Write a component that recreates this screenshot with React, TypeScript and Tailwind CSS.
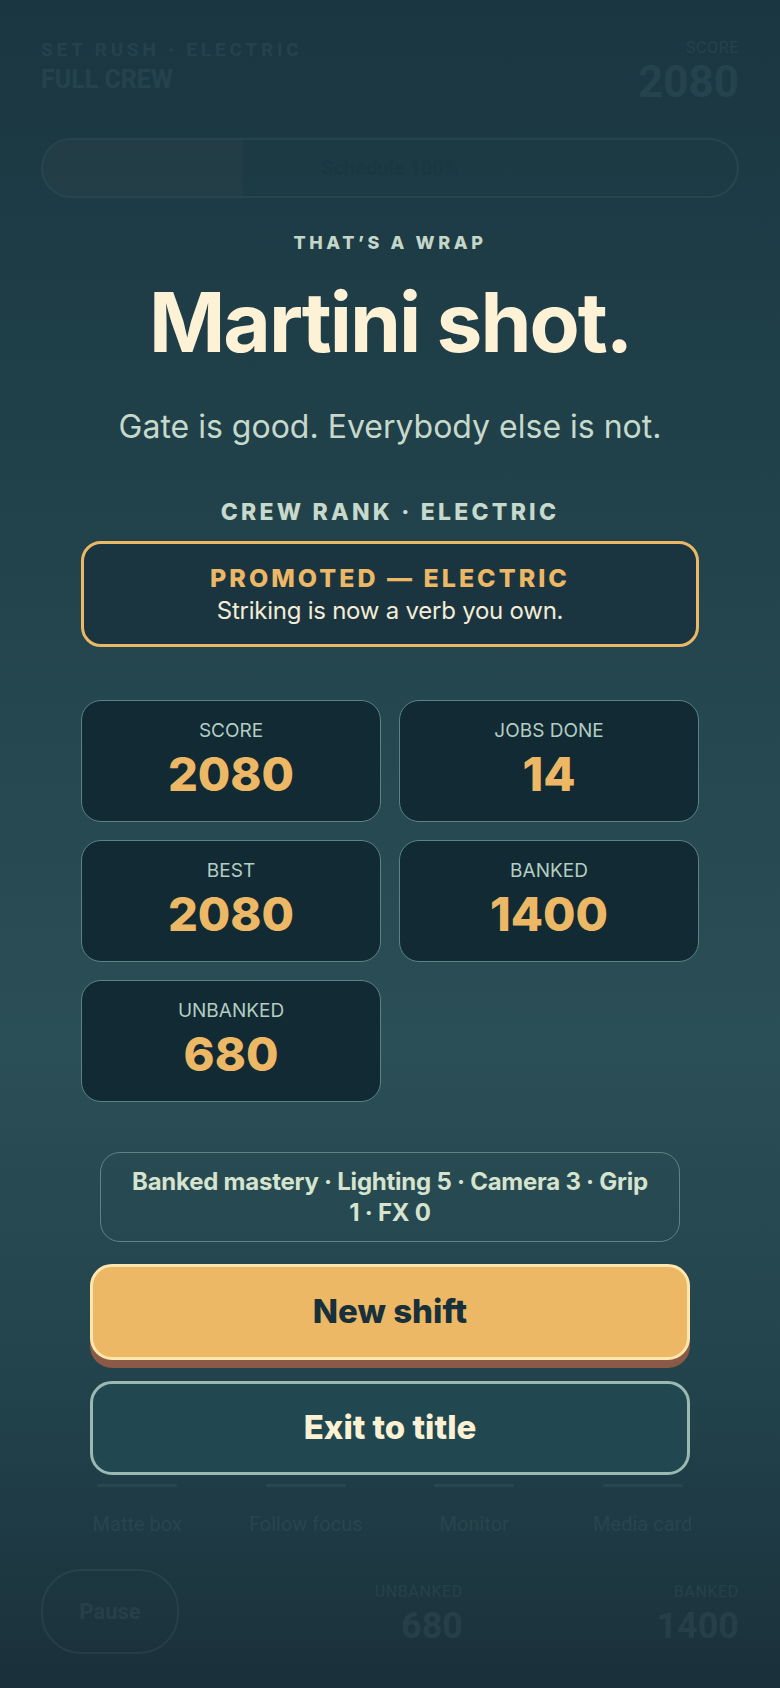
import type { ReactNode } from "react";

interface Stat {
  label: string;
  value: string;
}

const stats: Stat[] = [
  { label: "SCORE", value: "2080" },
  { label: "JOBS DONE", value: "14" },
  { label: "BEST", value: "2080" },
  { label: "BANKED", value: "1400" },
  { label: "UNBANKED", value: "680" },
];

const tools = ["Matte box", "Follow focus", "Monitor", "Media card"];

function StatCard({ label, value }: Stat) {
  return (
    <div className="flex h-[122px] flex-col items-center rounded-[20px] border-[1.5px] border-[#5a8483] bg-[#112a33] pt-[19px]">
      <div className="text-[19px] leading-[22px] text-[#b4cdc2]">{label}</div>
      <div className="mt-[8px] text-[47px] leading-[48px] font-extrabold text-[#ecb865]">
        {value}
      </div>
    </div>
  );
}

function FaintStat({ label, value, big }: Stat & { big?: boolean }) {
  return (
    <div className="flex flex-col items-end">
      <span className="text-[16px] tracking-[0.04em]">{label}</span>
      <span
        className={
          big
            ? "text-[44px] leading-[44px] font-bold"
            : "mt-[4px] text-[36px] leading-[36px] font-bold"
        }
      >
        {value}
      </span>
    </div>
  );
}

// game screen that sits dimmed behind the wrap card
function ShiftScreen() {
  return (
    <div className="flex min-h-[1688px] flex-col px-[41px] pt-[36px] pb-[34px] font-[family-name:Roboto,sans-serif] text-[#9fc2bd] opacity-[0.08]">
      <div className="flex justify-between">
        <div>
          <div className="text-[19px] font-bold tracking-[0.2em]">SET RUSH · ELECTRIC</div>
          <div className="text-[25px] leading-[30px] font-bold">FULL CREW</div>
        </div>
        <FaintStat label="SCORE" value="2080" big />
      </div>
      <div className="mt-[34px] flex h-[60px] items-center overflow-hidden rounded-full border-2 border-[#9fc2bd]">
        <div className="h-full w-[200px] bg-[#c79a78]/50" />
        <div className="flex-1 pr-[200px] text-center text-[20px] font-bold text-[#0d1f25]">
          Schedule 100%
        </div>
      </div>
      <div className="flex-1" />
      <div className="grid grid-cols-4 gap-[16px] px-[20px]">
        {tools.map((t) => (
          <div key={t} className="flex flex-col items-center gap-[22px]">
            <div className="h-[3px] w-[80px] rounded bg-[#9fc2bd]" />
            <span className="text-[20px]">{t}</span>
          </div>
        ))}
      </div>
      <div className="mt-[30px] flex items-center">
        <div className="flex h-[85px] w-[138px] items-center justify-center rounded-[40px] border-2 border-[#9fc2bd] text-[22px] font-bold">
          Pause
        </div>
        <div className="flex flex-1 justify-end">
          <FaintStat label="UNBANKED" value="680" />
        </div>
        <div className="flex w-[276px] justify-end">
          <FaintStat label="BANKED" value="1400" />
        </div>
      </div>
    </div>
  );
}

function Button({
  children,
  primary,
}: {
  children: ReactNode;
  primary?: boolean;
}) {
  return primary ? (
    <button className="mx-[9px] flex h-[96px] items-center justify-center rounded-[22px] border-[3px] border-[#ffe7ad] bg-[#edb866] text-[33px] font-extrabold text-[#17303a] shadow-[0_8px_0_#8a5a46]">
      {children}
    </button>
  ) : (
    <button className="mx-[9px] flex h-[94px] items-center justify-center rounded-[22px] border-[3px] border-[#9bb9b2] bg-[#214851] text-[33px] font-extrabold text-[#fdf1d4]">
      {children}
    </button>
  );
}

function WrapCard() {
  return (
    <div className="absolute inset-0 flex flex-col px-[81px] pt-[231px] text-center">
      <div className="text-[18px] leading-[24px] font-extrabold tracking-[0.2em] text-[#c3d6c8]">
        THAT’S A WRAP
      </div>
      <h1 className="mt-[27px] text-[82px] leading-[82px] font-bold tracking-[-0.025em] text-[#fdf2d6]">
        Martini shot.
      </h1>
      <p className="mt-[45px] text-[32px] leading-[36px] text-[#c6d9cb]">
        Gate is good. Everybody else is not.
      </p>
      <div className="mt-[53px] text-[23px] leading-[28px] font-extrabold tracking-[0.14em] text-[#c6d9cb]">
        CREW RANK · ELECTRIC
      </div>
      <div className="mt-[15px] flex h-[106px] flex-col items-center justify-center rounded-[20px] border-[3px] border-[#ebb866] bg-[#1b3540]">
        <div className="text-[25px] leading-[30px] font-extrabold tracking-[0.12em] text-[#ecb865]">
          PROMOTED — ELECTRIC
        </div>
        <div className="mt-[4px] text-[24px] leading-[28px] tracking-[-0.01em] text-[#f3ecd7]">
          Striking is now a verb you own.
        </div>
      </div>
      <div className="mt-[53px] grid grid-cols-2 gap-[18px]">
        {stats.map((s) => (
          <StatCard key={s.label} {...s} />
        ))}
      </div>
      <div className="mx-[19px] mt-[50px] flex h-[90px] items-center justify-center rounded-[20px] border-[1.5px] border-[#5d8483] px-[28px] text-[24px] leading-[31px] font-bold tracking-[-0.01em] text-[#d6e3cf]">
        Banked mastery · Lighting 5 · Camera 3 · Grip 1 · FX 0
      </div>
      <div className="mt-[22px] flex flex-col gap-[21px]">
        <Button primary>New shift</Button>
        <Button>Exit to title</Button>
      </div>
    </div>
  );
}

export default function App() {
  return (
    <div className="relative min-h-[1688px] w-full overflow-hidden bg-[linear-gradient(180deg,#1a3641_0%,#21424b_30%,#2b4f56_62%,#22434c_82%,#1a303a_100%)] font-[family-name:Inter,'Noto_Sans',sans-serif]">
      <ShiftScreen />
      <WrapCard />
    </div>
  );
}
